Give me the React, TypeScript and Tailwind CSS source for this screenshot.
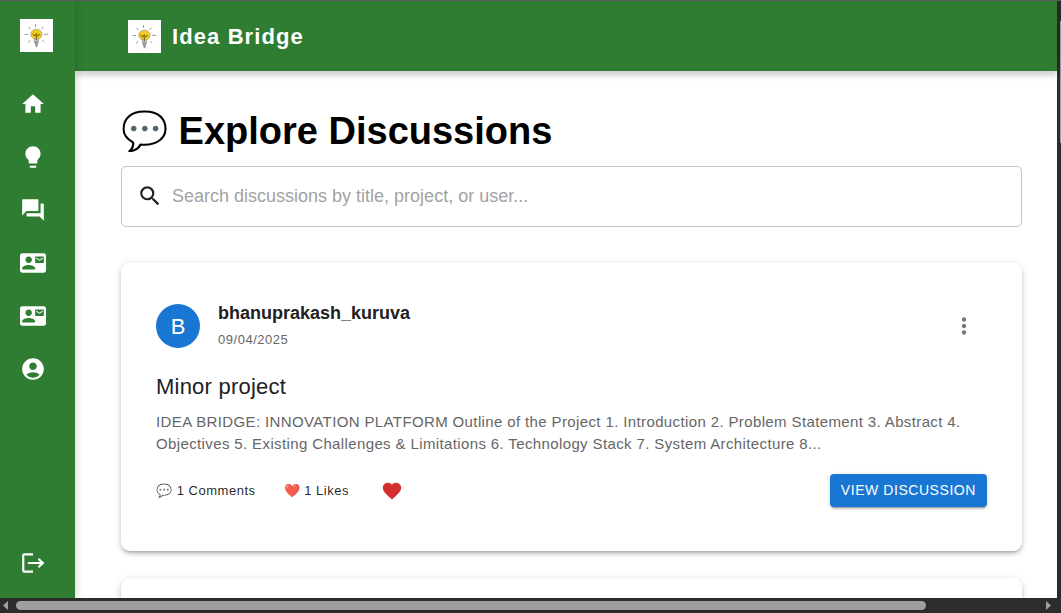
import type { ReactNode } from "react";
import {
  MdAccountCircle,
  MdContactMail,
  MdFavorite,
  MdForum,
  MdHome,
  MdLightbulb,
  MdMoreVert,
  MdSearch,
} from "react-icons/md";

function Logo() {
  return (
    <svg viewBox="0 0 33 33" className="size-[33px] shrink-0 bg-white" role="img" aria-label="Idea Bridge logo">
      <g stroke="#8f8f8f" strokeWidth="0.9" strokeLinecap="round">
        <path d="M15.5 5.5v2M8.8 8.3l1.3 1.6M21.8 9.6l1.4-1.6M5.2 15.5h2.4M24.5 15.5l3.3-.4M8.5 23l1.6-1.2M22.6 21.6l1.4 1.2" />
      </g>
      <path d="M14.300 18.500h4.200v4.500h-4.200z" fill="#d8d8d8" stroke="#9a9a9a" strokeWidth="0.8" />
      <ellipse cx="16.400" cy="15.200" rx="5.600" ry="5" fill="#f5cb1d" stroke="#a8a18a" strokeWidth="0.8" />
      <path d="M12.500 15l2.500 2 1.300-2.500 1.300 2.500 2.500-2M16.300 16.500v5" fill="none" stroke="#6d5a17" strokeWidth="1" />
      <path d="M14.400 22.800h4M14.500 24.400h3.800M15 26h3M15.800 27.500h1.300" stroke="#929292" strokeWidth="1.300" />
    </svg>
  );
}

function LogoutIcon() {
  return (
    <svg viewBox="0 0 24 24" className="size-[26px]" fill="none" stroke="currentColor" strokeWidth="2" aria-hidden="true">
      <path d="M12 4H4a1 1 0 0 0-1 1v14a1 1 0 0 0 1 1h8" />
      <path d="M8 12h13" strokeLinecap="round" />
      <path d="M17 8l4 4-4 4" />
    </svg>
  );
}

const navItems: { label: string; icon: ReactNode }[] = [
  { label: "Home", icon: <MdHome /> },
  { label: "Ideas", icon: <MdLightbulb /> },
  { label: "Discussions", icon: <MdForum /> },
  { label: "Contact", icon: <MdContactMail /> },
  { label: "Requests", icon: <MdContactMail /> },
  { label: "Profile", icon: <MdAccountCircle /> },
];

const cardClass =
  "rounded-[9px] bg-white px-[35px] pt-9 pb-11 shadow-[0_3px_3px_-2px_rgba(0,0,0,0.2),0_3px_4px_0_rgba(0,0,0,0.14),0_1px_9px_0_rgba(0,0,0,0.12)]";

function Sidebar() {
  return (
    <aside className="z-20 flex w-[75px] shrink-0 flex-col bg-[#2e7d32] pt-[18px] pb-[22px] pl-5 text-white shadow-[0_0_9px_rgba(0,0,0,0.2)]">
      <Logo />
      <nav className="mt-[39px] flex flex-col gap-[27px] text-[26px]">
        {navItems.map((item, i) => (
          <a key={i} href="#" aria-label={item.label} className="w-fit">
            {item.icon}
          </a>
        ))}
      </nav>
      <button type="button" aria-label="Log out" className="mt-auto w-fit">
        <LogoutIcon />
      </button>
    </aside>
  );
}

function DiscussionCard() {
  return (
    <article className={cardClass}>
      <div className="flex items-center">
        <div className="flex size-11 items-center justify-center rounded-full bg-[#1976d2] text-[22px] text-white">B</div>
        <div className="ml-[18px] flex-1">
          <p className="text-lg leading-7 font-bold">bhanuprakash_kuruva</p>
          <p className="text-[13px] leading-[26px] tracking-[0.04em] text-[#666]">09/04/2025</p>
        </div>
        <button type="button" aria-label="More options" className="mr-[10px] text-[26px] text-[#757575]">
          <MdMoreVert />
        </button>
      </div>
      <h2 className="mt-4 text-[22px] leading-9 tracking-[0.01em]">Minor project</h2>
      <p className="mt-[6px] text-[15px] leading-[22px] tracking-wide text-[#666]">
        IDEA BRIDGE: INNOVATION PLATFORM Outline of the Project 1. Introduction 2. Problem Statement 3. Abstract 4.
        Objectives 5. Existing Challenges &amp; Limitations 6. Technology Stack 7. System Architecture 8...
      </p>
      <div className="mt-[19px] flex items-center text-[13px] tracking-[0.04em] text-black/87">
        <span>💬 1 Comments</span>
        <span className="ml-7">❤️ 1 Likes</span>
        <button type="button" aria-label="Like" className="ml-8 text-[22px] text-[#d32f2f]">
          <MdFavorite />
        </button>
        <button
          type="button"
          className="ml-auto h-[33px] rounded-[4px] bg-[#1976d2] px-[11px] pb-[2px] text-sm tracking-[0.04em] text-white shadow-[0_3px_1px_-2px_rgba(0,0,0,0.2),0_2px_2px_0_rgba(0,0,0,0.14),0_1px_5px_0_rgba(0,0,0,0.12)]"
        >
          VIEW DISCUSSION
        </button>
      </div>
    </article>
  );
}

export default function App() {
  return (
    <div className="flex h-screen flex-col overflow-hidden border-t border-[#5b5b5b] bg-white font-['Liberation_Sans',Arial,sans-serif] text-[#212121]">
      <div className="flex min-h-0 flex-1">
        <Sidebar />
        <div className="flex min-w-0 flex-1 flex-col">
          <header className="z-10 flex h-[70px] shrink-0 items-center gap-[11px] bg-[#2e7d32] pl-[53px] text-white shadow-[0_4px_6px_0_rgba(0,0,0,0.14),0_1px_11px_0_rgba(0,0,0,0.12)]">
            <Logo />
            <span className="text-[22px] font-bold tracking-wider">Idea Bridge</span>
          </header>
          <main className="min-h-0 flex-1 overflow-hidden pt-[37px] pr-[35px] pl-[46px]">
            <h1 className="text-[38px] leading-[46px] font-bold text-black">💬 Explore Discussions</h1>
            <label className="mt-3 flex h-[61px] items-center rounded-[5px] border border-[#c4c4c4] pb-px pl-[15px]">
              <MdSearch className="size-[26px] shrink-0" />
              <input
                type="text"
                aria-label="Search discussions"
                placeholder="Search discussions by title, project, or user..."
                className="ml-[9px] min-w-0 flex-1 bg-transparent text-lg outline-none placeholder:text-[#a2a2a2]"
              />
            </label>
            <div className="mt-9 flex flex-col gap-[27px]">
              <DiscussionCard />
              <article className={cardClass} />
            </div>
          </main>
        </div>
        <div className="w-1 shrink-0 bg-[#2c2c2c] pt-5 pl-[3px]">
          <div className="h-[122px] bg-[#9f9f9f]" />
        </div>
      </div>
      <div className="z-30 flex h-[15px] shrink-0 items-center bg-[#2c2c2c] pr-[10px] pl-[3px]">
        <svg viewBox="0 0 5 9" className="h-[9px] w-[5px]" fill="#9f9f9f" aria-hidden="true">
          <path d="M5 0v9L0 4.500z" />
        </svg>
        <div className="mx-2 flex-1">
          <div className="h-[9px] w-[89%] rounded-full bg-[#9f9f9f]" />
        </div>
        <svg viewBox="0 0 5 9" className="h-[9px] w-[5px]" fill="#9f9f9f" aria-hidden="true">
          <path d="M0 0v9l5-4.500z" />
        </svg>
      </div>
    </div>
  );
}
